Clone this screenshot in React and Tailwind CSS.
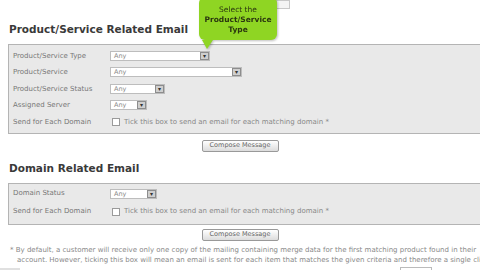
import React from 'react';

function Select({ width }) {
  return (
    <div
      className="flex h-[10px] items-stretch border border-[#bdbdbd] bg-white"
      style={{ width }}
    >
      <span className="flex-1 pl-[3px] text-[6.5px] leading-[9px] text-[#8a8a8a]">Any</span>
      <span className="flex w-[9px] items-center justify-center border border-[#8d8d8d] bg-[#cfcfcf] text-[6px] leading-none text-[#333]">
        ▾
      </span>
    </div>
  );
}

function Row({ label, children, h = 'h-[16.5px]' }) {
  return (
    <div className={`flex items-center ${h}`}>
      <span className="w-[101px] pl-[4px] text-[7px] text-[#777]">{label}</span>
      {children}
    </div>
  );
}

function DomainCheck() {
  return (
    <div className="flex items-center gap-[4px] pl-[2px]">
      <span className="h-[8px] w-[8px] border border-[#9a9a9a] bg-white" />
      <span className="text-[7px] text-[#888]">
        Tick this box to send an email for each matching domain *
      </span>
    </div>
  );
}

function ComposeButton() {
  return (
    <div className="flex justify-center">
      <div className="flex h-[12px] w-[77px] items-center justify-center rounded-[2px] border border-[#999] bg-gradient-to-b from-white to-[#dcdcdc] text-[6.5px] text-[#666]">
        Compose Message
      </div>
    </div>
  );
}

export default function App() {
  return (
    <div
      className="relative h-[270px] w-[480px] overflow-hidden bg-white"
      style={{ fontFamily: '"DejaVu Sans", Verdana, sans-serif' }}
    >
      <div className="flex h-[14px] items-start pl-[276px]">
        <div className="h-[9px] w-[14px] border border-[#c8c8c8] bg-[#f4f4f4]" />
      </div>

      <h2 className="pl-[9px] pt-[9px] text-[10.5px] font-bold leading-[13px] text-[#3a3a3a]">
        Product/Service Related Email
      </h2>

      <div className="ml-[8px] mt-[8px] border-y border-l border-[#b4b4b4] bg-[#e9e9e9] py-[2.5px]">
        <Row label="Product/Service Type">
          <Select width={100} />
        </Row>
        <Row label="Product/Service">
          <Select width={132} />
        </Row>
        <Row label="Product/Service Status">
          <Select width={55} />
        </Row>
        <Row label="Assigned Server">
          <Select width={37} />
        </Row>
        <Row label="Send for Each Domain">
          <DomainCheck />
        </Row>
      </div>

      <div className="pt-[6px]">
        <ComposeButton />
      </div>

      <h2 className="pl-[9px] pt-[10px] text-[10.5px] font-bold leading-[13px] text-[#3a3a3a]">
        Domain Related Email
      </h2>

      <div className="ml-[8px] mt-[8px] border-y border-l border-[#b4b4b4] bg-[#e9e9e9] pb-[3px] pt-[1px]">
        <Row label="Domain Status" h="h-[18px]">
          <Select width={47} />
        </Row>
        <Row label="Send for Each Domain" h="h-[18px]">
          <DomainCheck />
        </Row>
      </div>

      <div className="pt-[4px]">
        <ComposeButton />
      </div>

      <div className="pt-[4px] text-[7px] leading-[10px] text-[#888]">
        <p className="whitespace-nowrap pl-[10px]">
          * By default, a customer will receive only one copy of the mailing containing merge data for the first matching product found in their
        </p>
        <p className="whitespace-nowrap pl-[17px]">
          account. However, ticking this box will mean an email is sent for each item that matches the given criteria and therefore a single client
        </p>
      </div>

      <div className="flex h-[6px] items-end">
        <div className="h-[3px] w-[20px] bg-[#e0e0e0]" />
        <div className="ml-[380px] h-[4px] w-[32px] border-x border-t border-[#bbb]" />
      </div>

      {/* tooltip */}
      <div className="absolute left-[199px] top-[-3px] drop-shadow-[1px_1px_1px_rgba(0,0,0,0.25)]">
        <div className="flex h-[43px] w-[78px] flex-col items-center justify-center rounded-[6px] bg-[#8fd523] pt-[2px] text-center text-[7.5px] leading-[10px] text-[#2b3610]">
          <span>Select the</span>
          <span className="font-bold">Product/Service</span>
          <span className="font-bold">Type</span>
        </div>
        <svg className="ml-[3px] block" width="12" height="9" viewBox="0 0 12 9">
          <polygon points="0,0 11,0 5,9" fill="#8fd523" />
        </svg>
      </div>
    </div>
  );
}
